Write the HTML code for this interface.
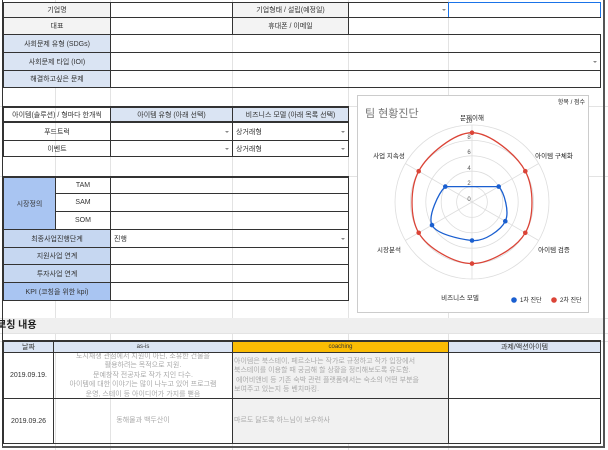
<!DOCTYPE html><html><head><meta charset="utf-8"><style>
*{margin:0;padding:0;box-sizing:border-box}
body{width:608px;height:450px;overflow:hidden;background:#fff;position:relative;font-family:"Liberation Sans","Noto Sans CJK KR",sans-serif;font-size:7px;color:#333}
.c{position:absolute;border:1px solid #333;display:flex;align-items:center;justify-content:center;white-space:nowrap;overflow:hidden}
.g{background:#f3f3f3}.b{background:#dae4f3}.bb{background:#c6d7f1}.bs{background:#a9c5f2}
.l{justify-content:flex-start;padding-left:3px}
.v{position:absolute;top:0;bottom:0;width:1px;background:#e3e3e3}
.h{position:absolute;left:0;right:0;height:1px;background:#e3e3e3}
.dd{position:absolute;right:3px;top:50%;margin-top:-1px;border-left:2px solid transparent;border-right:2px solid transparent;border-top:2px solid #888}
.t{text-align:center;line-height:9.5px;color:#aaa;white-space:normal}
</style></head><body>
<div class="v" style="left:55px"></div><div class="v" style="left:110px"></div><div class="v" style="left:232px"></div><div class="v" style="left:348px"></div><div class="v" style="left:448px"></div>
<div class="h" style="top:106px"></div><div class="h" style="top:176px"></div><div class="h" style="top:318px"></div><div class="h" style="top:333px"></div><div class="h" style="top:341px"></div>
<div style="position:absolute;left:2px;top:0;bottom:2px;width:1px;background:#333"></div>
<div style="position:absolute;left:603px;top:0;bottom:2px;width:2px;background:#555"></div>
<div style="position:absolute;left:2px;right:3px;bottom:2px;height:2px;background:#555"></div>

<div class="c g" style="left:3px;top:2px;width:108px;height:16px">기업명</div>
<div class="c" style="left:110px;top:2px;width:123px;height:16px"></div>
<div class="c g" style="left:232px;top:2px;width:117px;height:16px">기업형태 / 설립(예정일)</div>
<div class="c" style="left:348px;top:2px;width:101px;height:16px;border-right:none"><span class="dd"></span></div>
<div class="c" style="left:448px;top:2px;width:153px;height:16px;border:1px solid #1a73e8"></div>
<div class="c g" style="left:3px;top:17px;width:108px;height:18px">대표</div>
<div class="c" style="left:110px;top:17px;width:123px;height:18px"></div>
<div class="c g" style="left:232px;top:17px;width:117px;height:18px">휴대폰 / 이메일</div>
<div class="c" style="left:348px;top:17px;width:253px;height:18px;border-right:none"></div>
<div class="c b" style="left:3px;top:34px;width:108px;height:19px">사회문제 유형 (SDGs)</div>
<div class="c" style="left:110px;top:34px;width:491px;height:19px"></div>
<div class="c b" style="left:3px;top:52px;width:108px;height:19px">사회문제 타입 (IOI)</div>
<div class="c" style="left:110px;top:52px;width:491px;height:19px"><span class="dd"></span></div>
<div class="c b" style="left:3px;top:70px;width:108px;height:18px">해결하고싶은 문제</div>
<div class="c" style="left:110px;top:70px;width:491px;height:18px"></div>

<div class="c" style="left:3px;top:106px;width:108px;height:17px;border-width:2px 1px">아이템(솔루션) / 형마다 한개씩</div>
<div class="c b" style="left:110px;top:106px;width:123px;height:17px;border-width:2px 1px">아이템 유형 (아래 선택)</div>
<div class="c b" style="left:232px;top:106px;width:117px;height:17px;border-width:2px 1px">비즈니스 모델 (아래 목록 선택)</div>
<div class="c" style="left:3px;top:122px;width:108px;height:19px">푸드트럭</div>
<div class="c" style="left:110px;top:122px;width:123px;height:19px"><span class="dd"></span></div>
<div class="c l" style="left:232px;top:122px;width:117px;height:19px">상거래형<span class="dd"></span></div>
<div class="c" style="left:3px;top:140px;width:108px;height:17px">이벤트</div>
<div class="c" style="left:110px;top:140px;width:123px;height:17px"><span class="dd"></span></div>
<div class="c l" style="left:232px;top:140px;width:117px;height:17px">상거래형<span class="dd"></span></div>

<div class="c bs" style="left:3px;top:176px;width:53px;height:54px;border-width:2px 1px 1px 1px">시장정의</div>
<div class="c" style="left:55px;top:176px;width:56px;height:18px;border-top-width:2px">TAM</div>
<div class="c" style="left:55px;top:193px;width:56px;height:19px">SAM</div>
<div class="c" style="left:55px;top:211px;width:56px;height:19px">SOM</div>
<div class="c" style="left:110px;top:176px;width:239px;height:18px;border-top-width:2px"></div>
<div class="c" style="left:110px;top:193px;width:239px;height:19px"></div>
<div class="c" style="left:110px;top:211px;width:239px;height:19px"></div>
<div class="c bb" style="left:3px;top:229px;width:108px;height:19px">최종사업진행단계</div>
<div class="c l" style="left:110px;top:229px;width:239px;height:19px">진행<span class="dd"></span></div>
<div class="c bb" style="left:3px;top:247px;width:108px;height:18px">지원사업 연계</div>
<div class="c" style="left:110px;top:247px;width:239px;height:18px"></div>
<div class="c bb" style="left:3px;top:264px;width:108px;height:19px">투자사업 연계</div>
<div class="c" style="left:110px;top:264px;width:239px;height:19px"></div>
<div class="c bs" style="left:3px;top:282px;width:108px;height:19px">KPI (코칭을 위한 kpi)</div>
<div class="c" style="left:110px;top:282px;width:239px;height:19px"></div>

<div style="position:absolute;left:357px;top:95px;width:232px;height:218px;background:#fff;border:1px solid #ccc">
<svg width="232" height="218" style="position:absolute;left:-1px;top:-1px" font-family="Liberation Sans,Noto Sans CJK KR,sans-serif">
<text x="8" y="22" font-size="11" fill="#757575">팀 현황진단</text>
<text x="228" y="9" font-size="6" fill="#222" text-anchor="end">항목 / 점수</text>
<g transform="translate(115,107)" fill="none" stroke="#ddd" stroke-width="0.8">
<circle r="15.4"/><circle r="30.8"/><circle r="46.2"/><circle r="61.6"/><circle r="77"/>
<line y1="-77" y2="77"/><line x1="-66.7" y1="-38.5" x2="66.7" y2="38.5"/><line x1="66.7" y1="-38.5" x2="-66.7" y2="38.5"/>
<g fill="#555" stroke="none" font-size="6" text-anchor="middle"><text x="-3" y="-79">10</text><text x="-3" y="-63">8</text><text x="-3" y="-48">6</text><text x="-3" y="-32">4</text><text x="-3" y="-17">2</text><text x="-3" y="-1">0</text></g>
<path d="M0,-69.3 C17.8,-69.3 44.4,-47.5 53.3,-30.8 C62.2,-14.1 62.2,15.4 53.3,30.8 C44.4,46.2 17.8,61.6 0,61.6 C-17.8,61.6 -44.4,46.2 -53.3,30.8 C-62.2,15.4 -62.2,-14.1 -53.3,-30.8 C-44.4,-47.5 -17.8,-69.3 0,-69.3Z" stroke="#db4437" stroke-width="1.3"/>
<path d="M-26.7,-15.4 L26.7,-15.4 C32.3,-9.6 37.7,10.2 33.3,19.2 C28.9,28.2 12.2,39.9 0,38.5 C-12.2,37.2 -35.6,32.1 -40,23.1 C-44.4,14.1 -33.4,-9 -26.7,-15.4Z" stroke="#1a5fd0" stroke-width="1.3"/>
<g fill="#db4437" stroke="none"><circle cy="-69.3" r="2.3"/><circle cx="53.3" cy="-30.8" r="2.3"/><circle cx="53.3" cy="30.8" r="2.3"/><circle cy="61.6" r="2.3"/><circle cx="-53.3" cy="30.8" r="2.3"/><circle cx="-53.3" cy="-30.8" r="2.3"/></g>
<g fill="#1a5fd0" stroke="none"><circle cx="26.7" cy="-15.4" r="2.3"/><circle cx="33.3" cy="19.2" r="2.3"/><circle cy="38.5" r="2.3"/><circle cx="-40" cy="23.1" r="2.3"/><circle cx="-26.7" cy="-15.4" r="2.3"/></g>
<g fill="#222" stroke="none" font-size="6.5" text-anchor="middle"><text y="-82">문제이해</text><text x="82" y="-44">아이템 구체화</text><text x="82" y="50">아이템 검증</text><text y="98" x="-12">비즈니스 모델</text><text x="-83" y="50">시장분석</text><text x="-83" y="-44">사업 지속성</text></g>
</g>
<circle cx="157" cy="205" r="2.8" fill="#1a5fd0"/><text x="163" y="207" font-size="6" fill="#222">1차 진단</text>
<circle cx="197" cy="205" r="2.8" fill="#db4437"/><text x="203" y="207" font-size="6" fill="#222">2차 진단</text>
</svg></div>

<div style="position:absolute;left:3px;top:318px;width:600px;height:15px;background:#efefef"></div>
<div style="position:absolute;left:-3px;top:318px;font-size:10px;font-weight:bold;color:#222;line-height:15px">코칭 내용</div>

<div class="c b" style="left:3px;top:340px;width:51px;height:13px;border-width:2px 1px 1px 1px">날짜</div>
<div class="c b" style="left:53px;top:340px;width:180px;height:13px;border-width:2px 1px 1px 1px;font-size:6px">as-is</div>
<div class="c" style="left:232px;top:340px;width:217px;height:13px;background:#fbbc04;border-width:2px 1px 1px 1px;font-size:6px">coaching</div>
<div class="c b" style="left:448px;top:340px;width:153px;height:13px;border-width:2px 1px 1px 1px">과제/액션아이템</div>
<div class="c" style="left:3px;top:352px;width:51px;height:47px">2019.09.19.</div>
<div class="c t" style="left:53px;top:352px;width:180px;height:47px">도시재생 관점에서 지원이 아닌, 소유한 건물을<br>활용하려는 목적으로 지원.<br>문예창작 전공자로 작가 지인 다수.<br>아이템에 대한 이야기는 많이 나누고 있어 프로그램<br>운영, 스테이 등 아이디어가 가지를 뻗음</div>
<div class="c t" style="left:232px;top:352px;width:217px;height:47px;background:#f1f1f1;text-align:left;justify-content:flex-start;padding-left:1px">아이템은 북스테이, 페르소나는 작가로 규정하고 작가 입장에서<br>북스테이를 이용할 때 궁금해 할 상황을 정리해보도록 유도함.<br>&nbsp;에어비앤비 등 기존 숙박 관련 플랫폼에서는 숙소의 어떤 부분을<br>보여주고 있는지 등 벤치마킹.</div>
<div class="c" style="left:448px;top:352px;width:153px;height:47px"></div>
<div class="c" style="left:3px;top:398px;width:51px;height:46px">2019.09.26</div>
<div class="c t" style="left:53px;top:398px;width:180px;height:46px">동해물과 백두산이</div>
<div class="c t" style="left:232px;top:398px;width:217px;height:46px;background:#f1f1f1;justify-content:flex-start;padding-left:1px">마르도 닳도록 하느님이 보우하사</div>
<div class="c" style="left:448px;top:398px;width:153px;height:46px"></div>
</body></html>
